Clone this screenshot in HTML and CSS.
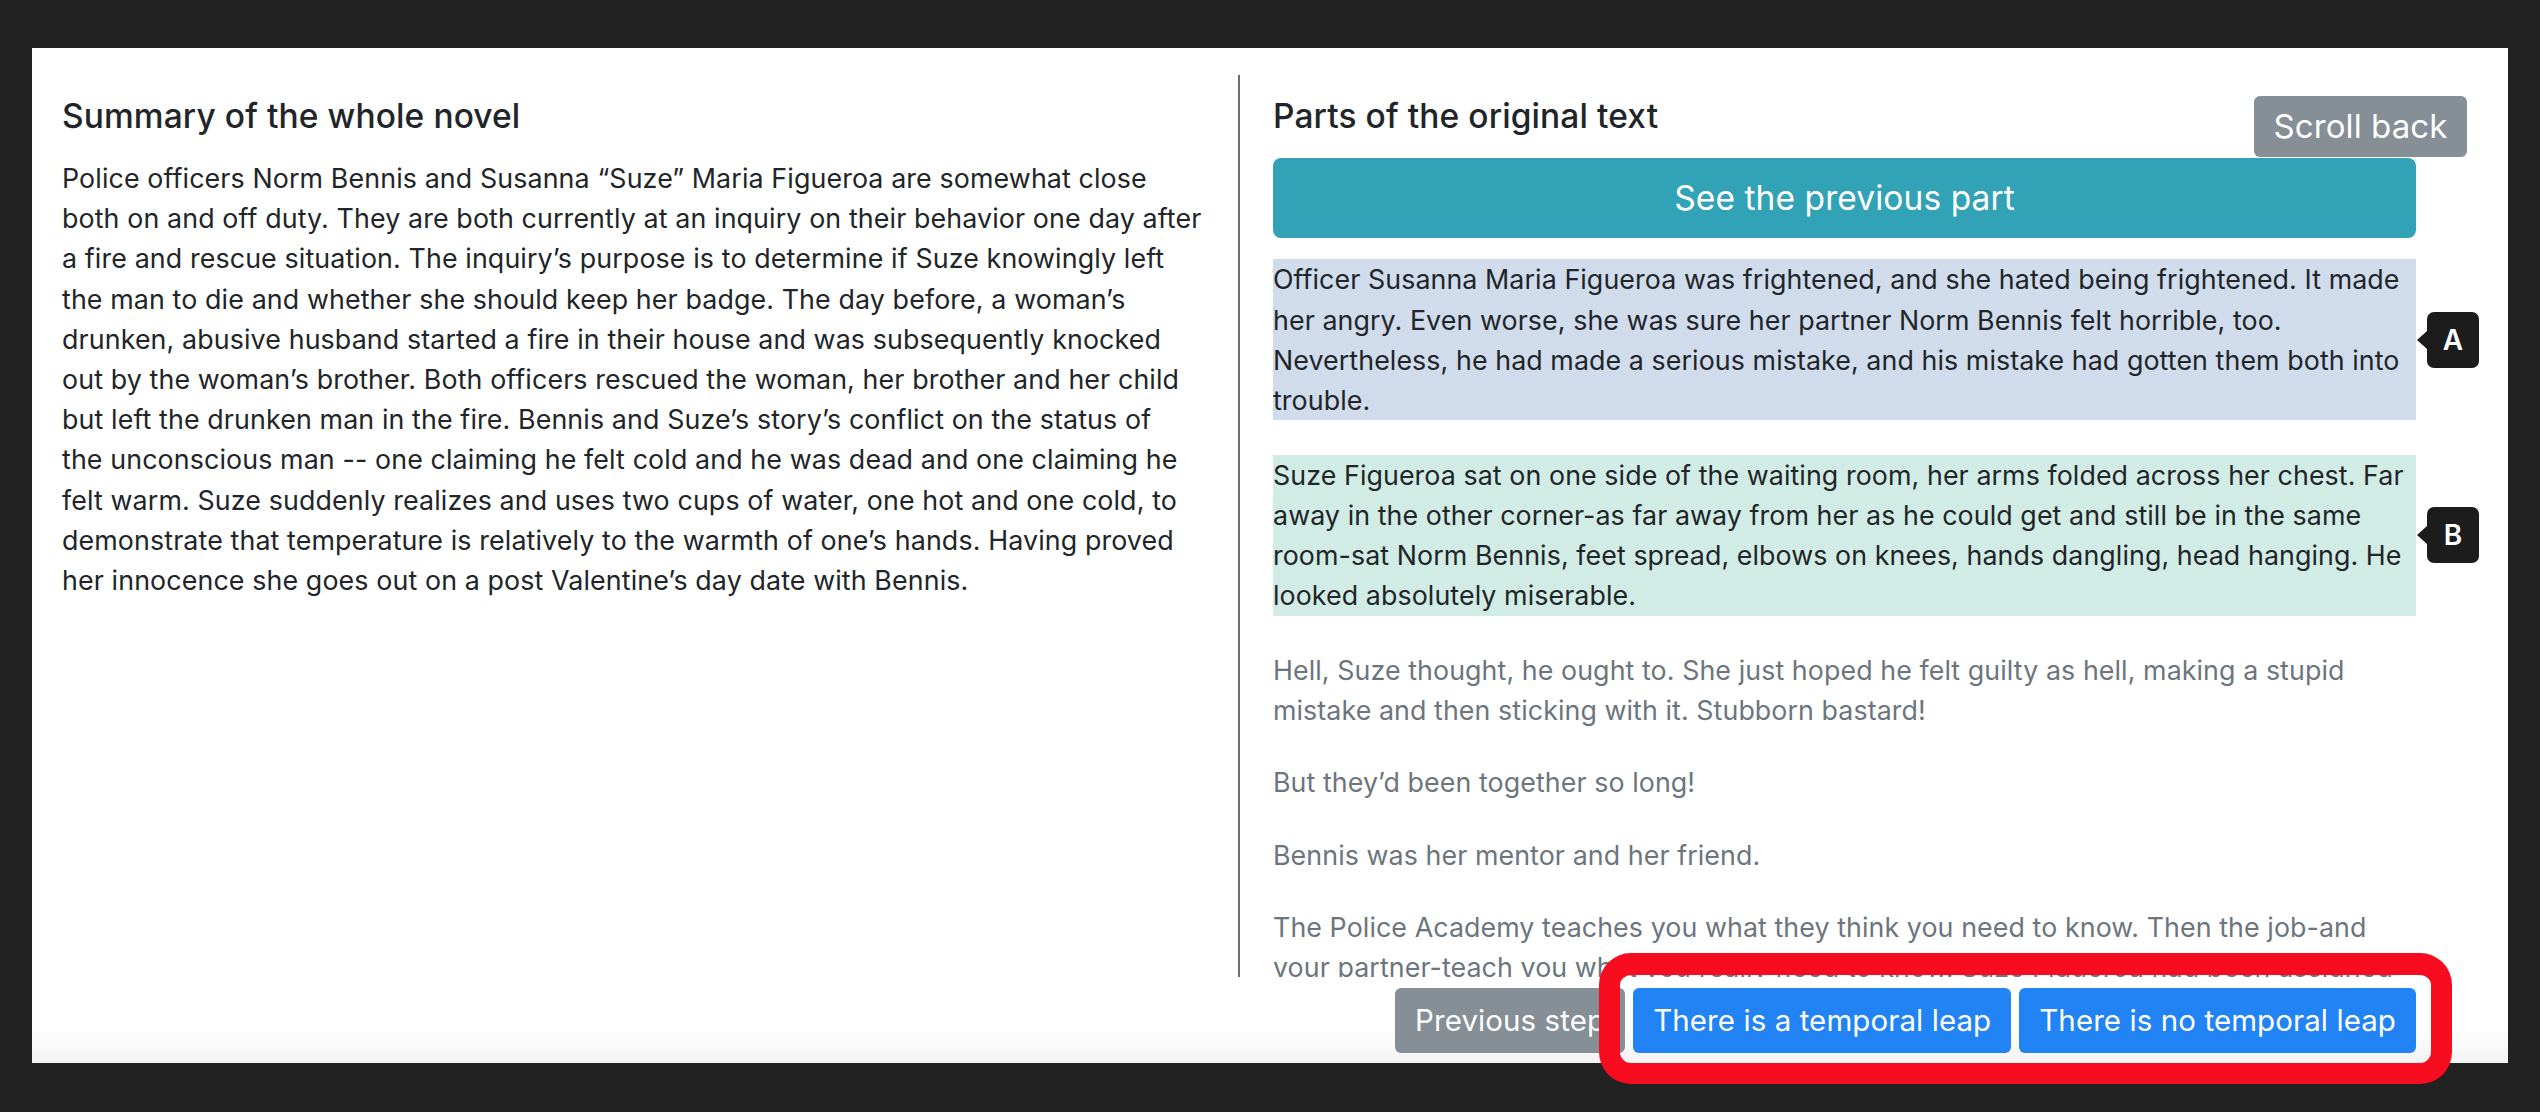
FILE: index.html
```html
<!DOCTYPE html>
<html lang="en">
<head>
<meta charset="utf-8">
<title>Temporal leap annotation</title>
<link rel="stylesheet" href="styles.css">
</head>
<body>
<div class="page">
  <main class="panel">
    <div class="columns">
      <section class="col col-summary">
        <h2 class="col-title">Summary of the whole novel</h2>
        <p class="summary-text">Police officers Norm Bennis and Susanna “Suze” Maria Figueroa are somewhat close<br>
both on and off duty. They are both currently at an inquiry on their behavior one day after<br>
a fire and rescue situation. The inquiry’s purpose is to determine if Suze knowingly left<br>
the man to die and whether she should keep her badge. The day before, a woman’s<br>
drunken, abusive husband started a fire in their house and was subsequently knocked<br>
out by the woman’s brother. Both officers rescued the woman, her brother and her child<br>
but left the drunken man in the fire. Bennis and Suze’s story’s conflict on the status of<br>
the unconscious man -- one claiming he felt cold and he was dead and one claiming he<br>
felt warm. Suze suddenly realizes and uses two cups of water, one hot and one cold, to<br>
demonstrate that temperature is relatively to the warmth of one’s hands. Having proved<br>
her innocence she goes out on a post Valentine’s day date with Bennis.</p>
      </section>
      <section class="col col-parts">
        <h2 class="col-title">Parts of the original text</h2>
        <button class="btn btn-scroll">Scroll back</button>
        <button class="btn btn-info">See the previous part</button>
        <div class="part part-a">
          <p>Officer Susanna Maria Figueroa was frightened, and she hated being frightened. It made her angry. Even worse, she was sure her partner Norm Bennis felt horrible, too. Nevertheless, he had made a serious mistake, and his mistake had gotten them both into trouble.</p>
          <span class="badge">A</span>
        </div>
        <div class="part part-b">
          <p>Suze Figueroa sat on one side of the waiting room, her arms folded across her chest. Far away in the other corner-as far away from her as he could get and still be in the same room-sat Norm Bennis, feet spread, elbows on knees, hands dangling, head hanging. He looked absolutely miserable.</p>
          <span class="badge">B</span>
        </div>
        <p class="muted">Hell, Suze thought, he ought to. She just hoped he felt guilty as hell, making a stupid mistake and then sticking with it. Stubborn bastard!</p>
        <p class="muted">But they’d been together so long!</p>
        <p class="muted">Bennis was her mentor and her friend.</p>
        <p class="muted">The Police Academy teaches you what they think you need to know. Then the job-and your partner-teach you what you really need to know. Suze Figueroa had been assigned</p>
      </section>
    </div>
    <footer class="actions">
      <button class="btn btn-secondary">Previous step</button>
      <button class="btn btn-primary">There is a temporal leap</button>
      <button class="btn btn-primary">There is no temporal leap</button>
    </footer>
  </main>
  <div class="annotation"></div>
</div>
</body>
</html>
```
FILE: styles.css
```css
* { box-sizing: border-box; }

html, body {
  margin: 0;
  padding: 0;
  background: #222222;
}

body {
  font-family: Inter, "Liberation Sans", sans-serif;
  font-size: 26.8px;
  line-height: 40.2px;
  letter-spacing: 0.08px;
  color: #212529;
  width: 2540px;
  height: 1112px;
  overflow: hidden;
}

.page {
  position: relative;
  padding: 48px 32px 0;
}

.panel {
  background: #ffffff;
  height: 1015px;
  display: flex;
  flex-direction: column;
}

.columns {
  display: flex;
  height: 902px;
  margin-top: 27px;
}

.col {
  padding-top: 21px;
}

.col-summary {
  width: 1206px;
  padding-left: 30px;
  padding-right: 20px;
}

.summary-text {
  letter-spacing: 0.12px;
}

.col-parts {
  position: relative;
  width: 1270px;
  border-left: 2px solid #6f6f6f;
  padding-left: 33px;
  padding-right: 92px;
  overflow: hidden;
}

.col-title {
  margin: 0 0 21.8px;
  font-size: 33.5px;
  line-height: 40.2px;
  font-weight: 500;
  letter-spacing: 0.1px;
  color: #212529;
}

p {
  margin: 0 0 32px;
}

.btn {
  font-family: inherit;
  border: 0;
  color: #ffffff;
  cursor: pointer;
  letter-spacing: 0.08px;
}

.btn-scroll {
  position: absolute;
  top: 21px;
  right: 41px;
  width: 213px;
  height: 61px;
  padding: 0;
  background: #868e96;
  border-radius: 6px;
  font-size: 33px;
  line-height: 61px;
}

.btn-info {
  display: block;
  width: 100%;
  height: 80.4px;
  margin-bottom: 21px;
  background: #32a2b7;
  border-radius: 8px;
  font-size: 33.5px;
}

.part {
  position: relative;
  margin-bottom: 34.5px;
}

.part p {
  margin: 0;
}

.part-a { background: #d0dbeb; }
.part-b { background: #d1ece4; }

.badge {
  position: absolute;
  left: calc(100% + 11px);
  top: 50%;
  transform: translateY(-50%);
  width: 52px;
  height: 56px;
  background: #1c1c1c;
  border-radius: 7px;
  color: #ffffff;
  font-size: 28px;
  font-weight: 600;
  line-height: 56px;
  text-align: center;
}

.badge::before {
  content: "";
  position: absolute;
  left: -10px;
  top: 50%;
  margin-top: -9px;
  border-right: 10px solid #1c1c1c;
  border-top: 9px solid transparent;
  border-bottom: 9px solid transparent;
}

.muted {
  color: #6c757d;
}

.actions {
  flex: 1;
  display: flex;
  justify-content: flex-end;
  align-items: flex-start;
  gap: 8px;
  padding: 11px 92px 0 0;
  background: linear-gradient(to bottom, #ffffff 60%, #f3f3f3 100%);
}

.actions .btn {
  height: 65px;
  padding: 0 20px;
  border-radius: 6px;
  font-size: 29.5px;
  line-height: 65px;
}

.btn-secondary { background: #868e96; }
.btn-primary { background: #2183f4; }

.annotation {
  position: absolute;
  left: 1599px;
  top: 953px;
  width: 853px;
  height: 131px;
  border: 21px solid #f80c1f;
  border-top-width: 22px;
  border-radius: 32px;
  pointer-events: none;
}
```
